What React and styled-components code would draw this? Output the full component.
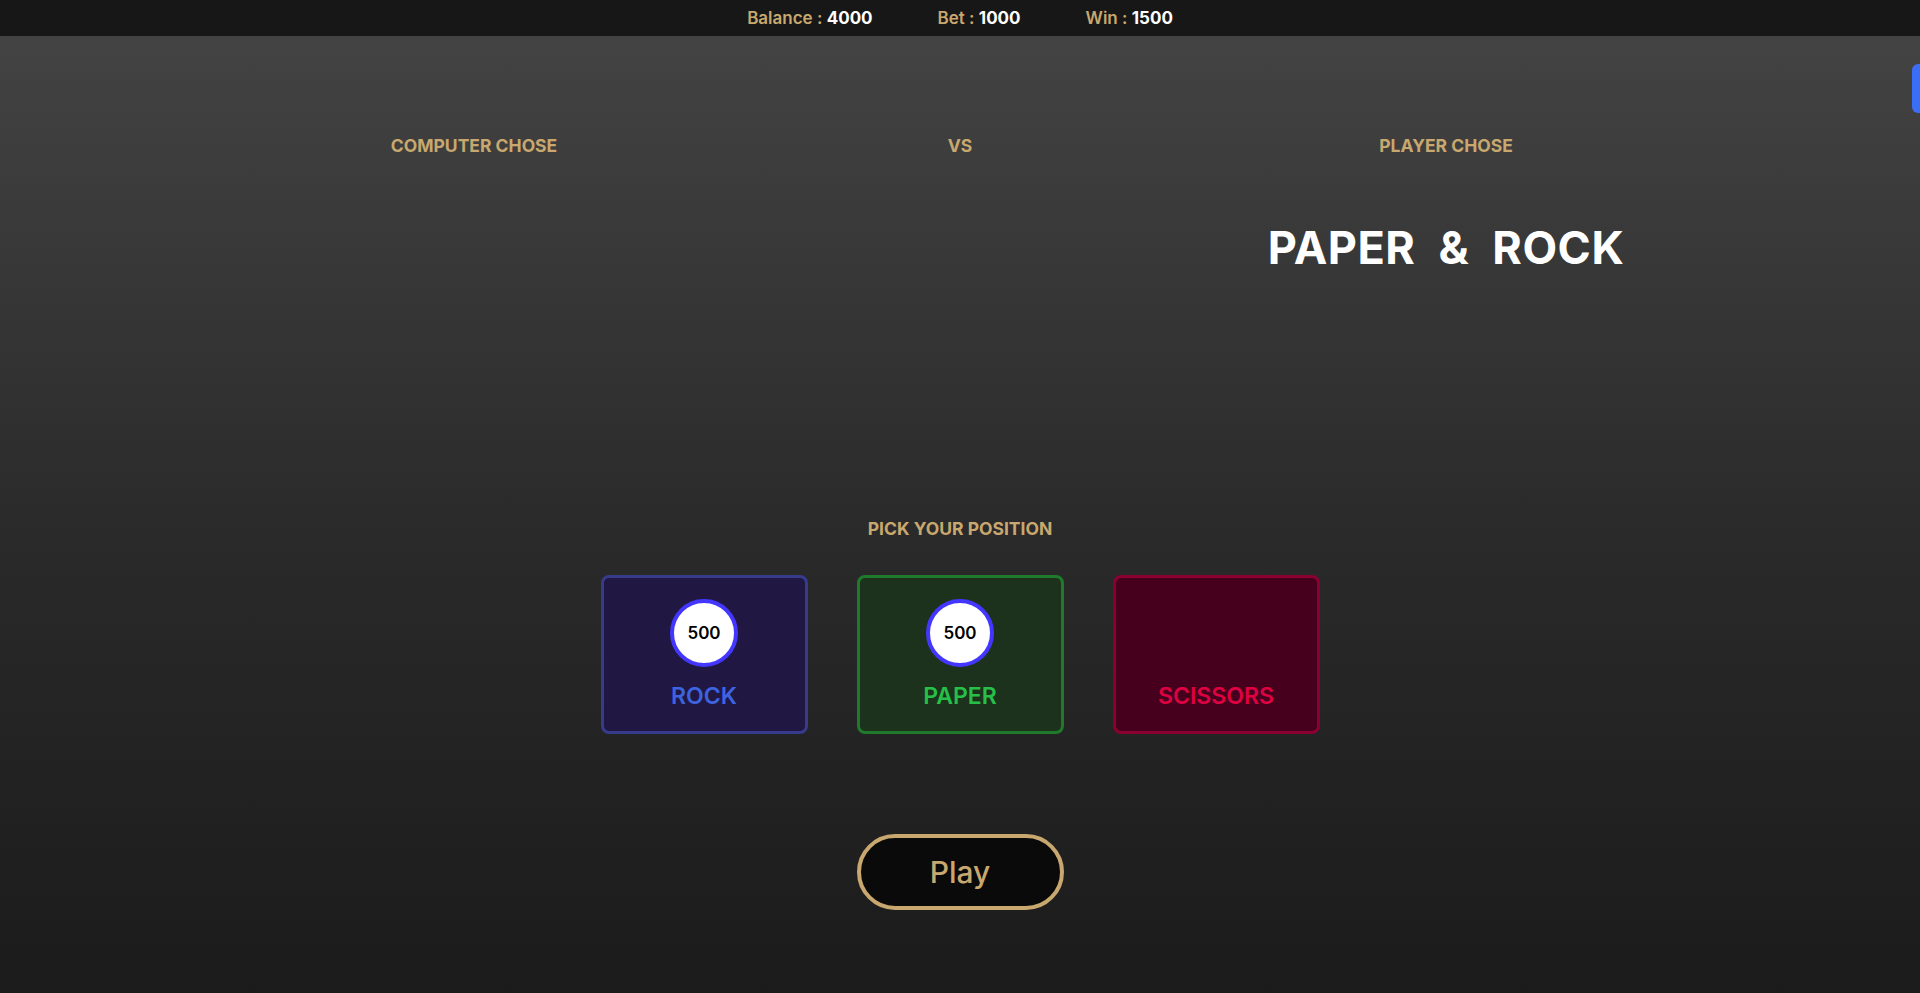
import React from "react";
import styled, { createGlobalStyle } from "styled-components";

const GlobalStyle = createGlobalStyle`
  * { box-sizing: border-box; }
  html, body { margin: 0; padding: 0; }
  body {
    font-family: Inter, "Noto Sans", "Liberation Sans", sans-serif;
    background: #1a1a1a;
  }
`;

const Page = styled.div`
  min-height: 100vh;
  display: flex;
  flex-direction: column;
`;

const TopBar = styled.header`
  height: 36px;
  background: #171717;
  display: flex;
  justify-content: center;
  align-items: center;
  gap: 65px;
`;

const Stat = styled.div`
  font-size: 17px;
  line-height: 22px;
  font-weight: 600;
  color: #c8a86e;
`;

const StatValue = styled.span`
  color: #ffffff;
  font-weight: 700;
`;

const Main = styled.main`
  flex: 1;
  background: linear-gradient(180deg, #434343 0%, #2a2a2a 52%, #1b1b1b 100%);
  padding-top: 99px;
  display: flex;
  flex-direction: column;
  align-items: center;
`;

const Arena = styled.section`
  width: 1458px;
  display: grid;
  grid-template-columns: repeat(3, 1fr);
  text-align: center;
`;

const Label = styled.div`
  font-size: 17.5px;
  line-height: 22px;
  font-weight: 700;
  color: #c8a86e;
  text-transform: uppercase;
`;

const ResultCell = styled.div`
  height: 292px;
  padding-top: 68px;
  display: flex;
  justify-content: center;
  align-items: flex-start;
`;

const ResultText = styled.div`
  font-size: 45px;
  line-height: 46px;
  font-weight: 700;
  color: #ffffff;
  letter-spacing: 0.5px;
  word-spacing: 12px;
`;

const PickSection = styled.section`
  margin-top: 69px;
  display: flex;
  flex-direction: column;
  align-items: center;
`;

const Cards = styled.div`
  margin-top: 35px;
  display: flex;
  gap: 49px;
`;

const palette = {
  rock: { bg: "#201843", border: "#363b8c", text: "#3d63e0" },
  paper: { bg: "#1c321c", border: "#1f7a2b", text: "#27bf48" },
  scissors: { bg: "#46001e", border: "#8a0031", text: "#df0042" },
};

const Card = styled.button`
  width: 207px;
  height: 159px;
  border-radius: 8px;
  border: 3px solid ${(p) => palette[p.$kind].border};
  background: ${(p) => palette[p.$kind].bg};
  padding: 21px 0 0;
  display: flex;
  flex-direction: column;
  align-items: center;
  cursor: pointer;
  font-family: inherit;
`;

const Chip = styled.div`
  width: 68px;
  height: 68px;
  border-radius: 50%;
  border: 4px solid #4337ff;
  background: #ffffff;
  display: flex;
  align-items: center;
  justify-content: center;
  font-size: 17px;
  font-weight: 600;
  color: #000;
  visibility: ${(p) => (p.$empty ? "hidden" : "visible")};
`;

const CardLabel = styled.div`
  margin-top: 16px;
  font-size: 23px;
  line-height: 26px;
  font-weight: 600;
  color: ${(p) => palette[p.$kind].text};
`;

const PlayButton = styled.button`
  margin-top: 100px;
  width: 207px;
  height: 76px;
  border-radius: 38px;
  border: 4px solid #c8a86e;
  background: #0a0a0a;
  color: #c8a86e;
  font-family: inherit;
  font-size: 30px;
  font-weight: 500;
  cursor: pointer;
`;

const SideTab = styled.div`
  position: fixed;
  right: 0;
  top: 64px;
  width: 8px;
  height: 49px;
  border-radius: 6px 0 0 6px;
  background: #3b6ef6;
`;

const choices = [
  { kind: "rock", name: "ROCK", bet: 500 },
  { kind: "paper", name: "PAPER", bet: 500 },
  { kind: "scissors", name: "SCISSORS", bet: null },
];

export default function App() {
  return (
    <Page>
      <GlobalStyle />
      <TopBar>
        <Stat>
          Balance : <StatValue>4000</StatValue>
        </Stat>
        <Stat>
          Bet : <StatValue>1000</StatValue>
        </Stat>
        <Stat>
          Win : <StatValue>1500</StatValue>
        </Stat>
      </TopBar>
      <Main>
        <Arena>
          <Label>Computer chose</Label>
          <Label>VS</Label>
          <Label>Player chose</Label>
          <ResultCell />
          <ResultCell />
          <ResultCell>
            <ResultText>PAPER &amp; ROCK</ResultText>
          </ResultCell>
        </Arena>
        <PickSection>
          <Label>Pick your position</Label>
          <Cards>
            {choices.map((c) => (
              <Card key={c.kind} $kind={c.kind}>
                <Chip $empty={c.bet == null}>{c.bet ?? ""}</Chip>
                <CardLabel $kind={c.kind}>{c.name}</CardLabel>
              </Card>
            ))}
          </Cards>
          <PlayButton>Play</PlayButton>
        </PickSection>
      </Main>
      <SideTab />
    </Page>
  );
}
